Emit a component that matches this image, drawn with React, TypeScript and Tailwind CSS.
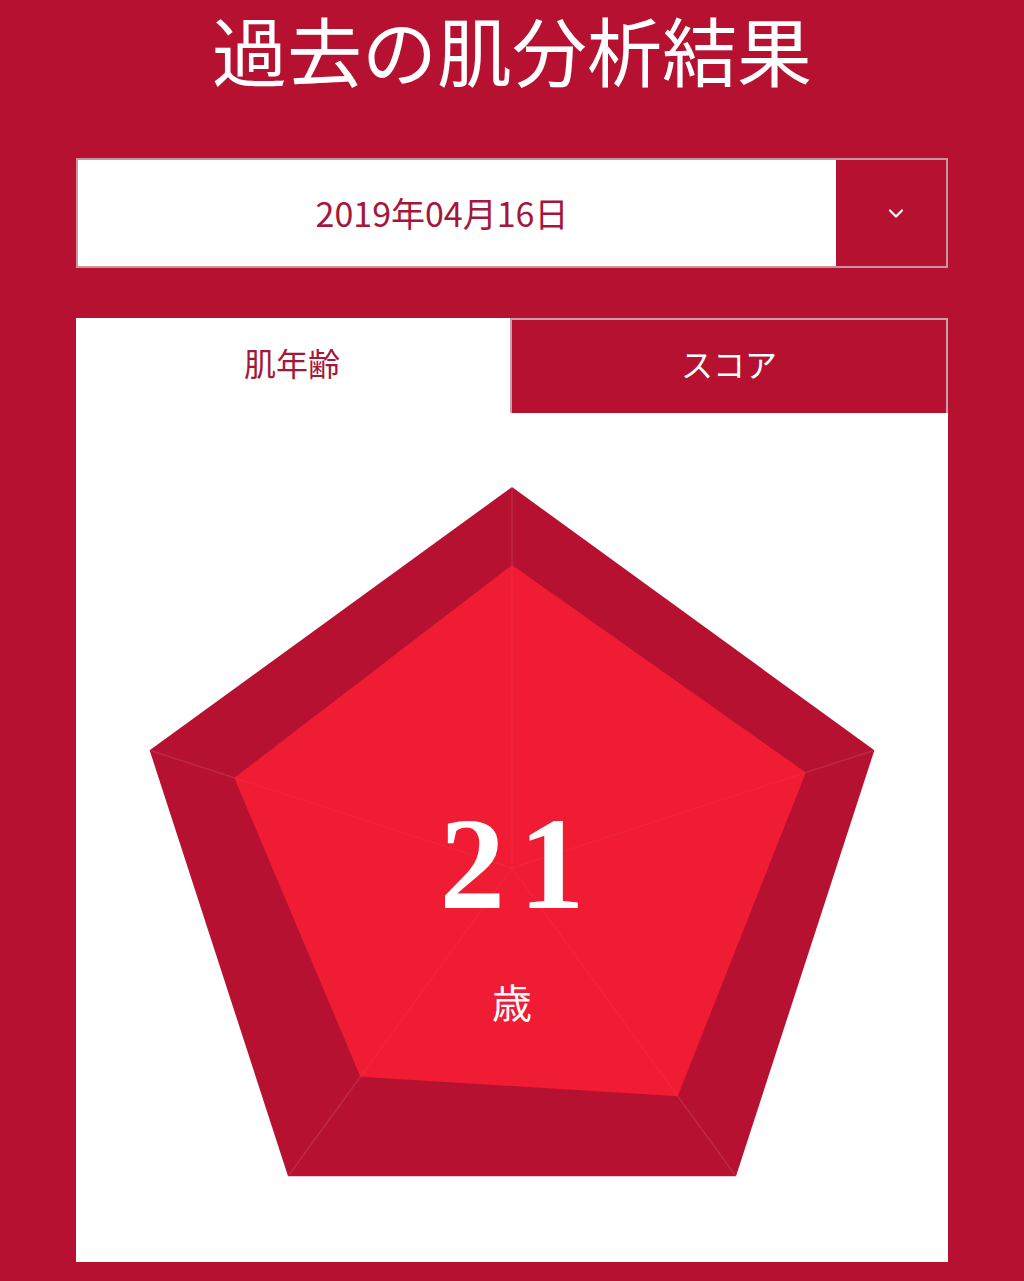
import React from "react";

const cx = 436;
const cy = 455;
const angles = [-90, -18, 54, 126, 198];
const pt = (r: number, a: number) => {
  const rad = (a * Math.PI) / 180;
  return [cx + r * Math.cos(rad), cy + r * Math.sin(rad)];
};
const outer = angles.map((a) => pt(381, a));
const innerR = [303, 309, 282, 258, 292];
const inner = angles.map((a, i) => pt(innerR[i], a));
const toPts = (p: number[][]) => p.map((q) => q.join(",")).join(" ");

export default function App() {
  return (
    <div
      className="w-[1024px] min-h-[1281px] bg-[#b61130] px-[76px] pb-[19px]"
      style={{ fontFamily: '"Noto Sans CJK JP", "Noto Sans", sans-serif' }}
    >
      <h1 className="pt-[4px] h-[158px] text-center text-white text-[75px] leading-[1.2] font-normal">
        過去の肌分析結果
      </h1>

      <div className="flex h-[110px] border-2 border-[#c8959e] bg-white">
        <div className="flex-1 flex items-center justify-center text-[#a5173a] text-[34px] pr-[30px] pb-[2px]">
          2019年04月16日
        </div>
        <div className="w-[110px] bg-[#b61130] flex items-center justify-center pl-[10px]">
          <svg width="18" height="11" viewBox="0 0 18 11">
            <polyline points="3,2.5 9,8.5 15,2.5" fill="none" stroke="#ffffff" strokeWidth="2.2" strokeLinecap="round" strokeLinejoin="round" />
          </svg>
        </div>
      </div>

      <div className="mt-[50px] bg-white">
        <div className="flex h-[95px]">
          <div className="flex-1 flex items-center justify-center text-[#a5173a] text-[32px] pb-[8px]">
            <span className="mr-[2px]">肌年齢</span>
          </div>
          <div className="flex-1 flex items-center justify-center bg-[#b61130] border-2 border-[#c8a0a8] border-b-0 text-white text-[32px] pb-[8px]">
            スコア
          </div>
        </div>
        <div className="relative h-[849px]">
          <svg width="872" height="849" viewBox="0 0 872 849" className="block">
            <polygon points={toPts(outer)} fill="#b61130" />
            <polygon points={toPts(inner)} fill="#ef1c33" />
            {outer.map((p, i) => (
              <line key={"o" + i} x1={inner[i][0]} y1={inner[i][1]} x2={p[0]} y2={p[1]} stroke="#ffffff" strokeOpacity="0.1" strokeWidth="1.5" />
            ))}
            {inner.map((p, i) => (
              <line key={"i" + i} x1={cx} y1={cy} x2={p[0]} y2={p[1]} stroke="#ffffff" strokeOpacity="0.035" strokeWidth="1.5" />
            ))}
          </svg>
          <div className="absolute left-0 right-0 top-[385px] flex flex-col items-center text-white">
            <div
              className="text-[131px] leading-none font-bold tracking-[14px] pl-[14px]"
              style={{ fontFamily: '"Liberation Serif", "DejaVu Serif", serif' }}
            >
              21
            </div>
            <div className="mt-[52px] text-[40px] leading-none">歳</div>
          </div>
        </div>
      </div>
    </div>
  );
}
